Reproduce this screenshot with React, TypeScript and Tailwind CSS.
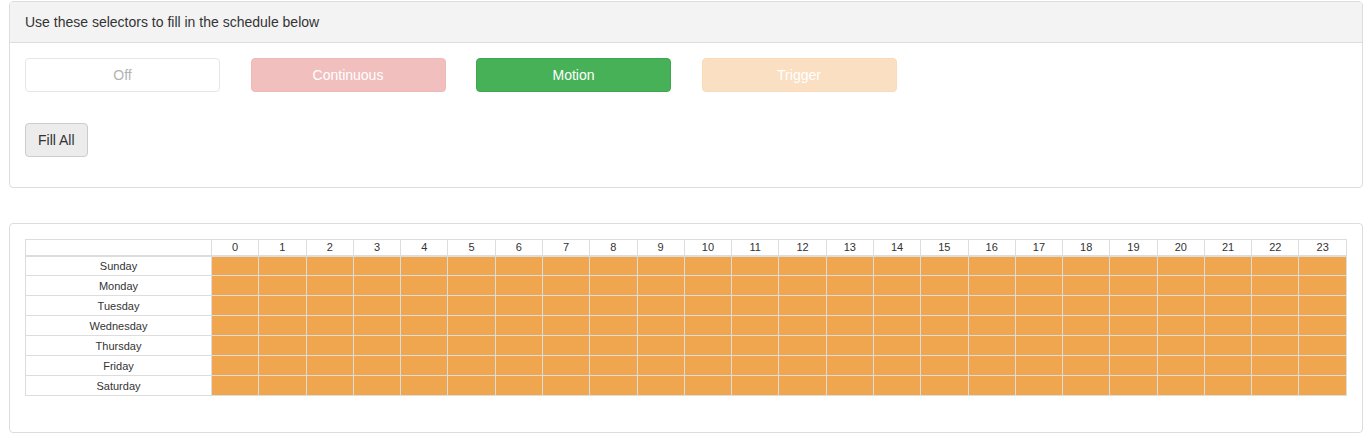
const days = [
  "Sunday",
  "Monday",
  "Tuesday",
  "Wednesday",
  "Thursday",
  "Friday",
  "Saturday",
];
const hours = Array.from({ length: 24 }, (_, i) => i);

const App = () => {
  return (
    <div
      className="min-h-screen bg-white pl-[9px] pr-[5px] pt-px text-[14px] text-[#333]"
      style={{ fontFamily: '"Liberation Sans", Arial, sans-serif' }}
    >
      {/* selectors panel */}
      <div className="rounded-[4px] border border-[#dddddd]">
        <div className="h-[41px] border-b border-[#dddddd] bg-[#f3f3f3] px-[15px] py-[10px] leading-[20px]">
          Use these selectors to fill in the schedule below
        </div>
        <div className="px-[15px] pt-[15px] pb-[30px]">
          <div className="flex gap-[30.5px]">
            <button className="h-[34px] w-[195px] rounded-[4px] border border-[#e6e6e6] bg-white text-[#b3b3b3]">
              Off
            </button>
            <button className="h-[34px] w-[195px] rounded-[4px] border border-[#efb9b8] bg-[#f2bfbf] text-white">
              Continuous
            </button>
            <button className="h-[34px] w-[195px] rounded-[4px] border border-[#3fa64e] bg-[#47b157] text-white">
              Motion
            </button>
            <button className="h-[34px] w-[195px] rounded-[4px] border border-[#f9dbbc] bg-[#fadfc2] text-white">
              Trigger
            </button>
          </div>
          <button className="mt-[31px] h-[34px] rounded-[4px] border border-[#cccccc] bg-[#ececec] px-[12px] text-[#333]">
            Fill All
          </button>
        </div>
      </div>

      {/* schedule panel */}
      <div className="mt-[35px] rounded-[4px] border border-[#dddddd] px-[15px] pt-[15px] pb-[36px]">
        <table className="w-full table-fixed border-collapse text-[11px] text-[#333]">
          <colgroup>
            <col className="w-[186px]" />
            {hours.map((h) => (
              <col key={h} />
            ))}
          </colgroup>
          <thead>
            <tr className="h-[16px]">
              <th className="border border-b-2 border-[#dddddd] p-0 font-normal"></th>
              {hours.map((h) => (
                <th
                  key={h}
                  className="border border-b-2 border-[#dddddd] p-0 text-center font-normal leading-[14px]"
                >
                  {h}
                </th>
              ))}
            </tr>
          </thead>
          <tbody>
            {days.map((d) => (
              <tr key={d} className="h-[20px]">
                <td className="border border-[#dddddd] p-0 text-center leading-[18px]">
                  {d}
                </td>
                {hours.map((h) => (
                  <td
                    key={h}
                    className="border border-[#dddddd] bg-[#f0a54f] p-0"
                  ></td>
                ))}
              </tr>
            ))}
          </tbody>
        </table>
      </div>
    </div>
  );
};

export default App;
